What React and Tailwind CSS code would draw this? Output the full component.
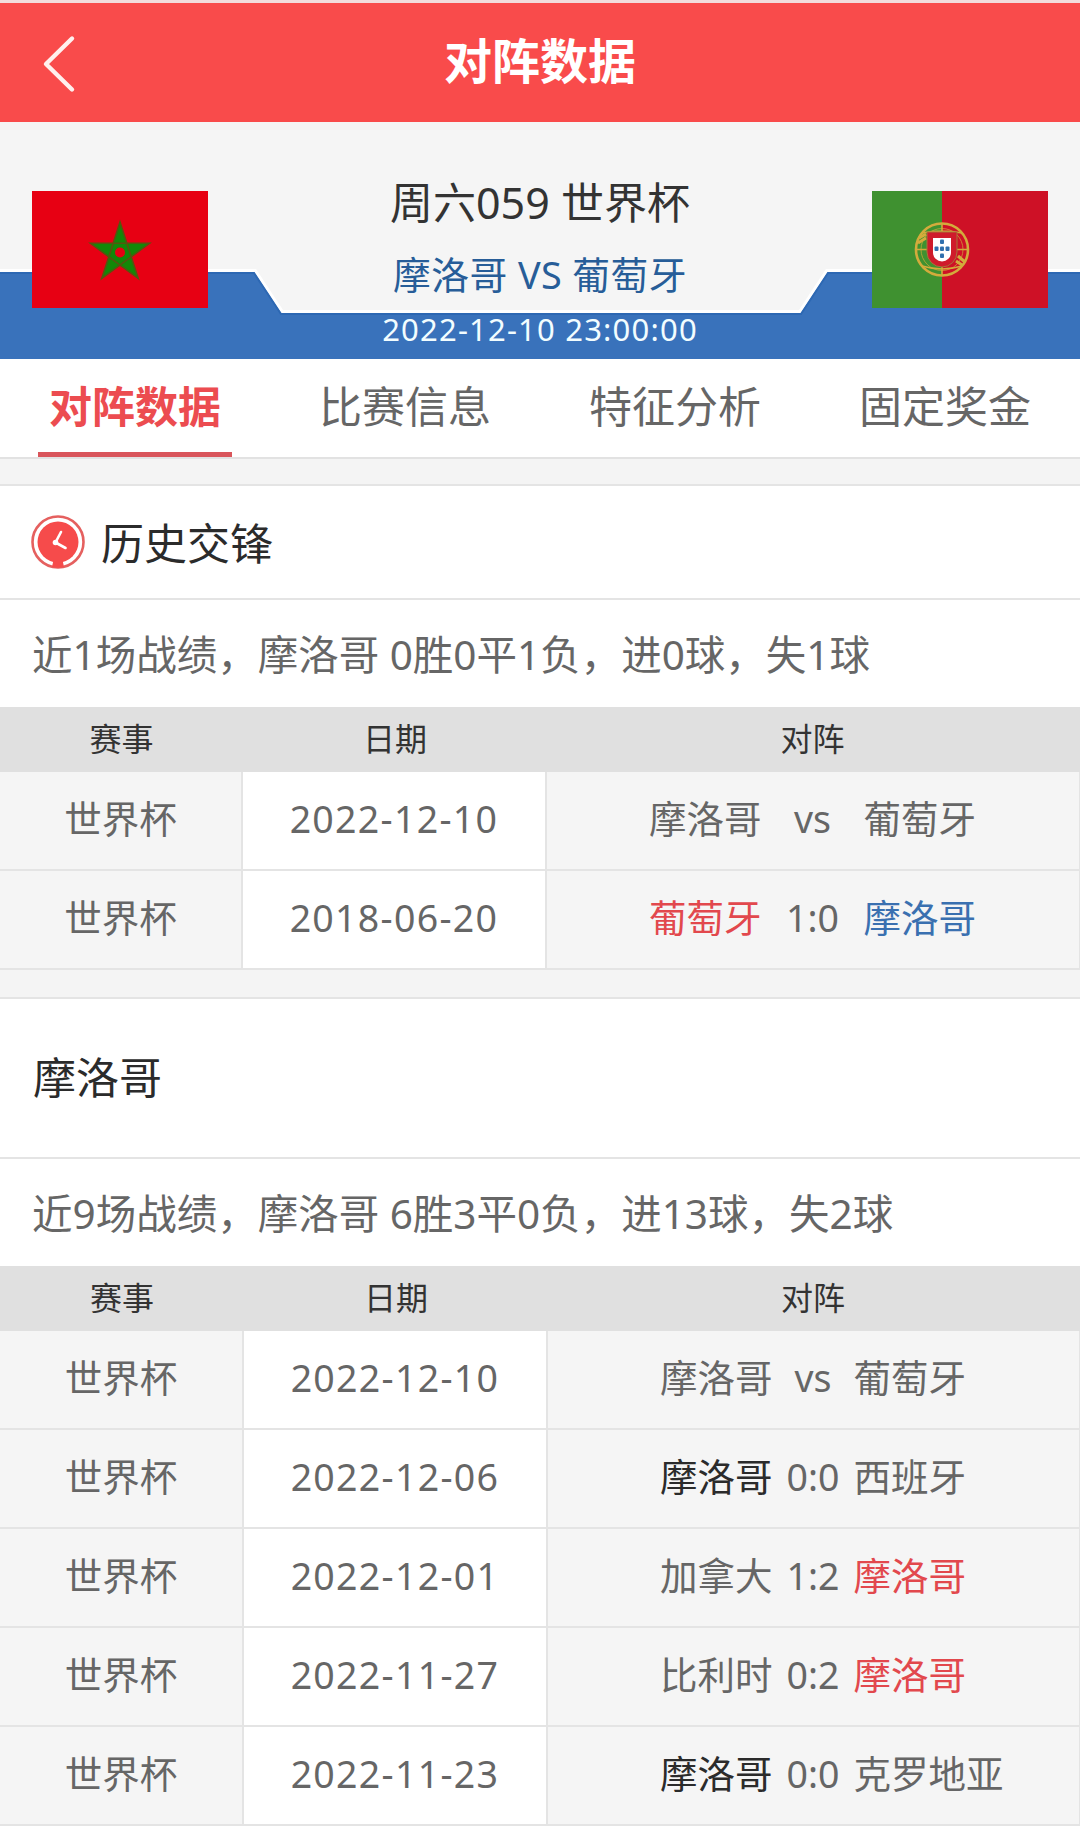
import React from 'react';
import clsx from 'clsx';

const TABS = ['对阵数据', '比赛信息', '特征分析', '固定奖金'];

const HISTORY = [
  { league: '世界杯', date: '2022-12-10', home: '摩洛哥', score: 'vs', away: '葡萄牙' },
  { league: '世界杯', date: '2018-06-20', home: '葡萄牙', score: '1:0', away: '摩洛哥', homeTone: 'win', awayTone: 'lose' },
];

const MOROCCO = [
  { league: '世界杯', date: '2022-12-10', home: '摩洛哥', score: 'vs', away: '葡萄牙' },
  { league: '世界杯', date: '2022-12-06', home: '摩洛哥', score: '0:0', away: '西班牙', homeTone: 'draw' },
  { league: '世界杯', date: '2022-12-01', home: '加拿大', score: '1:2', away: '摩洛哥', awayTone: 'win' },
  { league: '世界杯', date: '2022-11-27', home: '比利时', score: '0:2', away: '摩洛哥', awayTone: 'win' },
  { league: '世界杯', date: '2022-11-23', home: '摩洛哥', score: '0:0', away: '克罗地亚', homeTone: 'draw' },
];

const TONES = {
  win: 'text-[#e2484d]',
  lose: 'text-[#3a70b0]',
  draw: 'text-[#2b2b2b]',
};

const MoroccoFlag = () => (
  <svg viewBox="0 0 176 117" className="w-[176px] h-[117px] block">
    <rect width="176" height="117" fill="#e70013" />
    <path
      d="M88 31L106.200 87.500L58.500 52.300H117.500L69.800 87.500Z"
      fill="#138808"
      stroke="#55560f"
      strokeWidth="1.600"
    />
    <circle cx="88" cy="61.500" r="5" fill="#e70013" />
  </svg>
);

const PortugalFlag = () => (
  <svg viewBox="0 0 176 117" className="w-[176px] h-[117px] block">
    <rect width="176" height="117" fill="#ce1126" />
    <rect width="70" height="117" fill="#3f9130" />
    <g fill="none" stroke="#d3ab3c">
      <circle cx="70" cy="58.500" r="26" strokeWidth="2.600" />
      <circle cx="70" cy="58.500" r="21" strokeWidth="1" opacity="0.7" />
      <path d="M70 33v52M44 58.500h52M50 42q20 -4 40 0M50 75q20 6 40 0" strokeWidth="1.600" />
      <path d="M47 47l7 -4M46 52l8 -5M86 65l7 6M84 70l6 4" strokeWidth="3" />
    </g>
    <path d="M55 41h30v20a15 15 0 0 1 -30 0z" fill="#cf1b2b" stroke="#a8743a" strokeWidth="1" />
    <path d="M61 47h18v14.500a9 9 0 0 1 -18 0z" fill="#fff" />
    <g fill="#2f6fae">
      <rect x="68" y="48.500" width="4" height="4.500" rx="1" />
      <rect x="68" y="55.500" width="4" height="4.500" rx="1" />
      <rect x="68" y="62.500" width="4" height="4.500" rx="1" />
      <rect x="62.500" y="55.500" width="4" height="4.500" rx="1" />
      <rect x="73.500" y="55.500" width="4" height="4.500" rx="1" />
    </g>
  </svg>
);

const ClockIcon = () => (
  <svg viewBox="0 0 54 54" className="w-[54px] h-[54px] shrink-0">
    <circle cx="27" cy="27" r="25.500" fill="#fff" stroke="#e5605f" strokeWidth="2.600" />
    <circle cx="27" cy="27" r="20.500" fill="#f64b4b" />
    <path d="M22.500 45h9l1.500 7q-6 1.600 -12 0z" fill="#f64b4b" />
    <path d="M30 17L24.500 27.500L34.500 33" fill="none" stroke="#fff" strokeWidth="2.600" strokeLinecap="round" strokeLinejoin="round" />
    <circle cx="24.500" cy="27.500" r="2.800" fill="#fff" />
  </svg>
);

const Header = () => (
  <header className="h-[122px] border-t-[3px] border-[#f3dcdc] bg-[#f94b4b] grid grid-cols-[120px_1fr_120px] items-center">
    <button className="pl-[42px] pt-0.5">
      <svg viewBox="0 0 34 58" className="w-[34px] h-[58px]">
        <path d="M30 3.500L4 29L30 54.500" fill="none" stroke="#fff0ee" strokeWidth="4.400" strokeLinecap="round" strokeLinejoin="round" />
      </svg>
    </button>
    <h1 className="text-center text-[48px] leading-[56px] font-bold text-white pb-1">对阵数据</h1>
  </header>
);

const MatchHero = () => (
  <section className="relative h-[237px] bg-[#f5f5f5]">
    {/* blue ribbon behind the flags */}
    <svg viewBox="0 0 1080 237" className="absolute inset-0 w-full h-full">
      <path d="M0 149H255L282 190H800L827 149H1080" fill="none" stroke="#fff" strokeWidth="4" />
      <path d="M0 150H254L281 191H801L828 150H1080V237H0Z" fill="#3972bb" />
      <path d="M0 151H254L281 192H801L828 151H1080" fill="none" stroke="#2d68b3" strokeWidth="2" />
    </svg>
    <div className="relative h-full flex justify-between px-8">
      <div className="pt-[69px]">
        <MoroccoFlag />
      </div>
      <div className="flex flex-col items-center whitespace-nowrap">
        <p className="mt-[53px] text-[43px] leading-[56px] text-[#333]">周六059 世界杯</p>
        <p className="mt-[20px] text-[37.8px] leading-[48px] tracking-[0.4px] text-[#275d98]">摩洛哥 VS 葡萄牙</p>
        <p className="mt-[10px] text-[31px] leading-[40px] tracking-[1.2px] text-[#f2fdff]">2022-12-10 23:00:00</p>
      </div>
      <div className="pt-[69px]">
        <PortugalFlag />
      </div>
    </div>
  </section>
);

const TabBar = () => (
  <nav className="h-[100px] grid grid-cols-4 bg-white border-b-2 border-[#e2e2e2]">
    {TABS.map((tab, i) => (
      <button
        key={tab}
        className={clsx(
          'justify-self-center w-[194px] h-[98px] pt-[3px] text-[43px] leading-[56px] whitespace-nowrap border-b-[5px]',
          i === 0 ? 'font-bold text-[#ec4c50] border-[#d9555b]' : 'text-[#666] border-transparent'
        )}
      >
        {tab}
      </button>
    ))}
  </nav>
);

const Summary = ({ children }) => (
  <p className="h-[107px] pl-8 pt-[3px] flex items-center text-[40.5px] leading-[56px] text-[#666] whitespace-pre">{children}</p>
);

const MatchTable = ({ rows, cols, scoreCols }) => (
  <div>
    <div className={clsx('grid h-[65px] pb-0.5 pr-0.5 items-center bg-[#e0e0e0] text-center text-[32px] leading-[40px] text-[#333]', cols)}>
      <span>赛事</span>
      <span>日期</span>
      <span>对阵</span>
    </div>
    {rows.map((row) => (
      <div key={row.date} className={clsx('grid h-[99px] border-b-2 border-[#e4e4e4] text-[37.5px] leading-[48px] text-[#666]', cols)}>
        <div className="flex items-center justify-center pb-[3px] bg-[#f5f5f5] border-r-2 border-[#e4e4e4]">{row.league}</div>
        <div className="flex items-center justify-center pb-[3px] bg-white border-r-2 border-[#e4e4e4] tracking-[1.3px]">{row.date}</div>
        <div className={clsx('grid items-center pb-[3px] pr-px bg-[#f5f5f5] border-r border-[#e4e4e4] whitespace-nowrap', scoreCols)}>
          <span className={clsx('text-right', TONES[row.homeTone])}>{row.home}</span>
          <span className="text-center">{row.score}</span>
          <span className={clsx(TONES[row.awayTone])}>{row.away}</span>
        </div>
      </div>
    ))}
  </div>
);

const App = () => {
  return (
    <div className="w-[1080px] h-[1826px] overflow-hidden bg-[#f4f4f4] font-['Noto_Sans','Noto_Sans_CJK_SC',sans-serif]">
      <Header />
      <MatchHero />
      <TabBar />

      <section className="mt-[25px] bg-white border-t-2 border-[#e4e4e4]">
        <div className="h-[114px] pl-[31px] flex items-center gap-4 border-b-2 border-[#e4e4e4]">
          <ClockIcon />
          <h2 className="pt-[3px] text-[43px] leading-[56px] text-[#2b2b2b]">历史交锋</h2>
        </div>
        <Summary>近1场战绩，摩洛哥 0胜0平1负，进0球，失1球</Summary>
        <MatchTable rows={HISTORY} cols="grid-cols-[243px_304px_1fr]" scoreCols="grid-cols-[1fr_102px_1fr]" />
      </section>

      <section className="mt-[27px] bg-white border-t-2 border-[#e4e4e4]">
        <div className="h-[160px] pl-[33px] flex items-center border-b-2 border-[#e4e4e4]">
          <h2 className="text-[43px] leading-[56px] text-[#2b2b2b]">摩洛哥</h2>
        </div>
        <Summary>近9场战绩，摩洛哥 6胜3平0负，进13球，失2球</Summary>
        <MatchTable rows={MOROCCO} cols="grid-cols-[244px_304px_1fr]" scoreCols="grid-cols-[1fr_81px_1fr]" />
      </section>
    </div>
  );
};

export default App;
